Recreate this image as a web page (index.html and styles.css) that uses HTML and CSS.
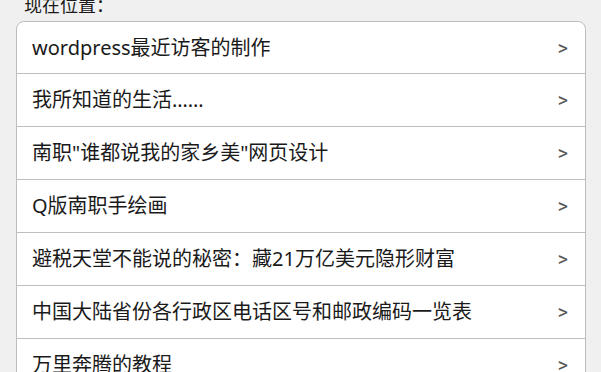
FILE: index.html
```html
<!DOCTYPE html>
<html lang="zh">
<head>
<meta charset="utf-8">
<link rel="stylesheet" href="styles.css">
</head>
<body>
<div class="page">
  <div class="crumb">现在位置：</div>
  <ul class="list">
    <li class="row"><span class="title">wordpress最近访客的制作</span><span class="arrow">&gt;</span></li>
    <li class="row"><span class="title">我所知道的生活……</span><span class="arrow">&gt;</span></li>
    <li class="row"><span class="title">南职"谁都说我的家乡美"网页设计</span><span class="arrow">&gt;</span></li>
    <li class="row"><span class="title">Q版南职手绘画</span><span class="arrow">&gt;</span></li>
    <li class="row"><span class="title">避税天堂不能说的秘密：藏21万亿美元隐形财富</span><span class="arrow">&gt;</span></li>
    <li class="row"><span class="title">中国大陆省份各行政区电话区号和邮政编码一览表</span><span class="arrow">&gt;</span></li>
    <li class="row"><span class="title">万里奔腾的教程</span><span class="arrow">&gt;</span></li>
  </ul>
</div>
</body>
</html>
```
FILE: styles.css
```css
html, body {
  margin: 0;
  padding: 0;
  background: #f0f0f0;
  overflow: hidden;
}
.page {
  display: flex;
  flex-direction: column;
  font-family: "Noto Sans", "Noto Sans CJK SC", sans-serif;
  color: #1a1a1a;
}
.crumb {
  margin-top: -5px;
  padding-left: 24px;
  font-size: 18px;
  line-height: 20px;
  height: 20px;
  color: #1a1a1a;
}
.list {
  list-style: none;
  margin: 6px 15px 0 16px;
  padding: 0;
  background: #fff;
  border: 1px solid #bdbdbd;
  border-radius: 8px;
}
.row {
  display: flex;
  align-items: center;
  justify-content: space-between;
  height: 52px;
  padding: 0 17px 0 15px;
  border-top: 1px solid #bdbdbd;
}
.row:first-child {
  height: 51px;
  border-top: none;
}
.title {
  font-size: 20px;
  line-height: 24px;
  color: #1a1a1a;
}
.arrow {
  font-family: Roboto, sans-serif;
  font-size: 20px;
  line-height: 24px;
  color: #555;
}
```
